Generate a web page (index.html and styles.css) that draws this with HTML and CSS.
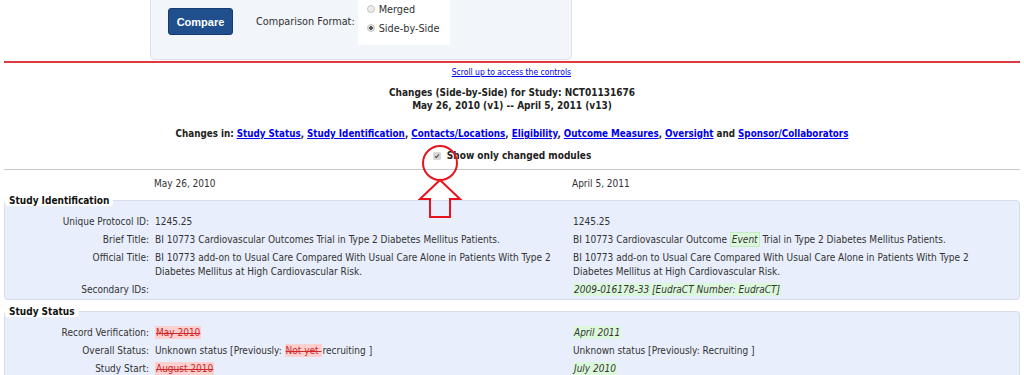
FILE: index.html
```html
<!DOCTYPE html>
<html>
<head>
	<meta charset="utf-8">
	<title>Changes for Study NCT01131676</title>
	<link rel="stylesheet" href="styles.css">
</head>
<body>

	<div class="controls">
		<button class="compare">Compare</button>
		<span class="fmt-label">Comparison Format:</span>
		<div class="fmt-box">
			<label><input type="radio" name="fmt"> Merged</label>
			<label><input type="radio" name="fmt" checked> Side-by-Side</label>
		</div>
	</div>

	<div class="red-rule"></div>
	<div class="scroll-row"><a href="#">Scroll up to access the controls</a></div>

	<div class="title">
		Changes (Side-by-Side) for Study: NCT01131676<br>
		May 26, 2010 (v1) -- April 5, 2011 (v13)
	</div>

	<div class="changes-in">
		Changes in: <a href="#">Study Status</a>, <a href="#">Study Identification</a>, <a href="#">Contacts/Locations</a>, <a href="#">Eligibility</a>, <a href="#">Outcome Measures</a>, <a href="#">Oversight</a> and <a href="#">Sponsor/Collaborators</a>
	</div>

	<div class="only-changed">
		<label><input type="checkbox" checked> Show only changed modules</label>
	</div>

	<div class="grey-rule"></div>

	<div class="dates">
		<span class="d1">May 26, 2010</span>
		<span class="d2">April 5, 2011</span>
	</div>

	<fieldset class="module">
		<legend>Study Identification</legend>
		<table>
			<tr><td class="lbl">Unique Protocol ID:</td><td class="v1">1245.25</td><td class="v2">1245.25</td></tr>
			<tr><td class="lbl">Brief Title:</td><td class="v1">BI 10773 Cardiovascular Outcomes Trial in Type 2 Diabetes Mellitus Patients.</td><td class="v2">BI 10773 Cardiovascular Outcome <ins class="add box">Event</ins> Trial in Type 2 Diabetes Mellitus Patients.</td></tr>
			<tr><td class="lbl">Official Title:</td><td class="v1">BI 10773 add-on to Usual Care Compared With Usual Care Alone in Patients With Type 2 Diabetes Mellitus at High Cardiovascular Risk.</td><td class="v2">BI 10773 add-on to Usual Care Compared With Usual Care Alone in Patients With Type 2 Diabetes Mellitus at High Cardiovascular Risk.</td></tr>
			<tr><td class="lbl">Secondary IDs:</td><td class="v1"></td><td class="v2"><ins class="add">2009-016178-33 [EudraCT Number: EudraCT]</ins></td></tr>
		</table>
	</fieldset>

	<fieldset class="module">
		<legend>Study Status</legend>
		<table>
			<tr><td class="lbl">Record Verification:</td><td class="v1"><del>May 2010</del></td><td class="v2"><ins class="add">April 2011</ins></td></tr>
			<tr><td class="lbl">Overall Status:</td><td class="v1">Unknown status [Previously: <del>Not yet </del>recruiting ]</td><td class="v2">Unknown status [Previously: Recruiting ]</td></tr>
			<tr><td class="lbl">Study Start:</td><td class="v1"><del>August 2010</del></td><td class="v2"><ins class="add">July 2010</ins></td></tr>
		</table>
	</fieldset>

	<svg class="annot" width="60" height="80" viewBox="0 0 60 80">
		<circle cx="29" cy="18" r="17" fill="none" stroke="#e8141c" stroke-width="2"/>
		<path d="M29 35 L49 54 L39 54 L39 72 L19 72 L19 54 L9 54 Z" fill="none" stroke="#e8141c" stroke-width="2"/>
	</svg>

</body>
</html>
```

FILE: styles.css
```css
body{
	margin: 0 4px;
	font-family: "DejaVu Sans Condensed", "DejaVu Sans", sans-serif;
	font-size: 10px;
	color: #333;
	background: #fff;
}
a{
	color: #0000ee;
}
.controls{
	margin-left: 146px;
	width: 420px;
	height: 59px;
	background: #f2f5fa;
	border: 1px solid #dde3ec;
	border-top: none;
	border-radius: 0 0 5px 5px;
	display: flex;
	align-items: flex-start;
}
.compare{
	margin: 8px 0 0 17px;
	width: 65px;
	height: 27px;
	background: #1f4f8d;
	color: #fff;
	border: 1px solid #163a6a;
	border-radius: 3px;
	font-family: "Liberation Sans", Arial, sans-serif;
	font-weight: bold;
	font-size: 11px;
}
.fmt-label{
	margin: 15px 0 0 23px;
	font-size: 10.8px;
}
.fmt-box{
	margin-left: 3px;
	width: 92px;
	height: 45px;
	background: #fff;
	display: flex;
	flex-direction: column;
	padding: 1px 0 0 9px;
	box-sizing: border-box;
	gap: 3px;
	font-size: 10.8px;
}
.fmt-box label{
	display: flex;
	align-items: center;
	gap: 3px;
	height: 16px;
}
.fmt-box input{
	appearance: none;
	margin: 0 1px 0 0;
	width: 8px;
	height: 8px;
	border-radius: 50%;
	border: 1px solid #c4c4c4;
	background: #ececec;
	box-sizing: border-box;
}
.fmt-box input:checked{
	background: radial-gradient(circle, #555 0 1.6px, #e4e4e4 2px);
}
.red-rule{
	margin: 1px -4px 0;
	border-top: 2px solid #e0393e;
}
.scroll-row{
	width: 567px;
	text-align: right;
	font-size: 8.5px;
	padding-top: 4px;
}
.title{
	text-align: center;
	font-weight: bold;
	line-height: 13px;
	margin-top: 9px;
	color: #222;
}
.changes-in{
	text-align: center;
	font-weight: bold;
	font-size: 9.75px;
	margin-top: 16px;
	color: #222;
}
.only-changed{
	text-align: center;
	font-weight: bold;
	margin-top: 11px;
	color: #222;
}
.only-changed input{
	appearance: none;
	width: 8px;
	height: 8px;
	margin: 0 3px 0 0;
	vertical-align: -1px;
	border-radius: 1px;
	background: #d8d8d8 url("data:image/svg+xml,%3Csvg xmlns='http://www.w3.org/2000/svg' viewBox='0 0 8 8'%3E%3Cpath d='M2 4.2 L3.4 5.6 L6 2.4' fill='none' stroke='%23555' stroke-width='1.2'/%3E%3C/svg%3E") no-repeat center;
}
.grey-rule{
	margin: 8px -4px 0;
	border-top: 1px solid #c8c8c8;
}
.dates{
	display: flex;
	padding-top: 8px;
	height: 14px;
}
.d1{
	margin-left: 150px;
	width: 418px;
}
.module{
	margin: 3px 0 6px;
	padding: 6px 0 1px;
	background: #e8eefc;
	border: 1px solid #d6dcea;
	border-radius: 4px;
}
.module legend{
	font-weight: bold;
	color: #111;
	background: #fff;
	padding: 0 4px;
	border-radius: 3px;
}
.module table{
	border-collapse: collapse;
	width: 100%;
}
.module td{
	vertical-align: top;
	padding: 3px 0 1px;
	line-height: 14px;
}
.lbl{
	width: 144px;
	text-align: right;
	padding-right: 6px !important;
}
.v1{
	width: 413px;
	padding-right: 5px !important;
}
.v2{
	padding-right: 40px !important;
}
del{
	background: #fdd0d0;
	color: #d02828;
	padding: 1px 1px;
}
ins.add{
	text-decoration: none;
	font-style: italic;
	background: #dcf8dc;
	padding: 1px 1px;
}
ins.box{
	border: 1px solid #c3ecc3;
}
.annot{
	position: absolute;
	left: 411px;
	top: 145px;
}
```
